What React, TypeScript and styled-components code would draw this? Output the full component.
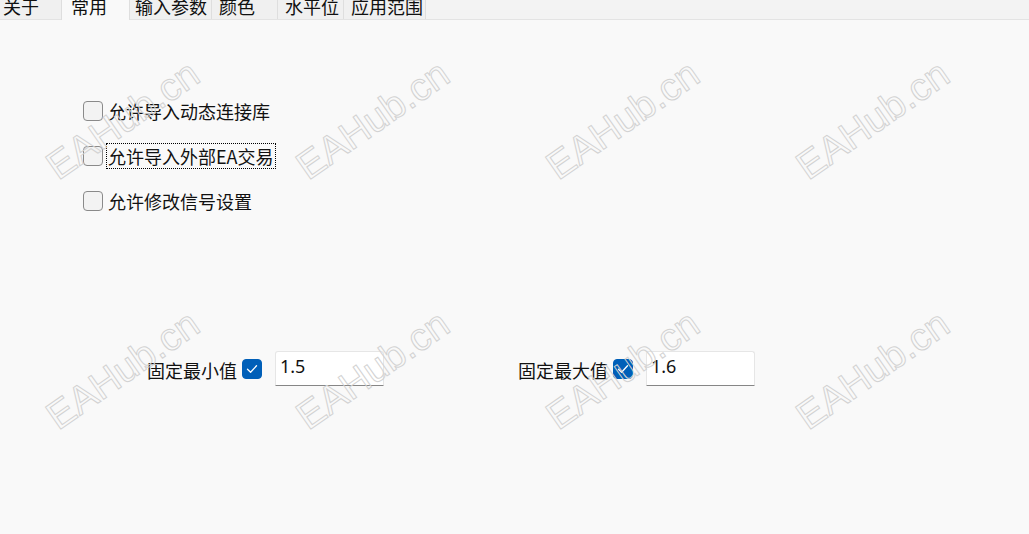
import React from 'react';
import styled, { createGlobalStyle } from 'styled-components';

const GlobalStyle = createGlobalStyle`
  html, body {
    margin: 0;
    padding: 0;
    background: #f9f9f9;
  }
  body {
    font-family: 'Noto Sans CJK SC', 'Noto Sans', sans-serif;
    color: #1a1a1a;
    overflow: hidden;
  }
`;

interface TabInfo {
  title: string;
  width: number;
  pad: number;
}

const tabs: TabInfo[] = [
  { title: '关于', width: 62, pad: 3 },
  { title: '常用', width: 69, pad: 9 },
  { title: '输入参数', width: 82, pad: 5 },
  { title: '颜色', width: 66, pad: 7 },
  { title: '水平位', width: 66, pad: 7 },
  { title: '应用范围', width: 82, pad: 7 },
];

const options = ['允许导入动态连接库', '允许导入外部EA交易', '允许修改信号设置'];

const CheckIcon = () => (
  <svg width="12" height="10" viewBox="0 0 12 10" fill="none">
    <path d="M1.5 5.2 L4.6 8.2 L10.5 1.8" stroke="#fff" strokeWidth="1.3" strokeLinecap="round" strokeLinejoin="round" />
  </svg>
);

export default function App() {
  return (
    <>
      <GlobalStyle />
      <Page>
        <TabBar>
          {tabs.map((t, i) => (
            <Tab key={t.title} $width={t.width} $pad={t.pad} $active={i === 1}>
              {t.title}
            </Tab>
          ))}
        </TabBar>

        <OptionList>
          {options.map((o, i) => (
            <OptionRow key={o}>
              <Box $checked={false} />
              <OptionLabel $focused={i === 1}>{o}</OptionLabel>
            </OptionRow>
          ))}
        </OptionList>

        <FieldRow>
          <Field>
            <FieldLabel>固定最小值</FieldLabel>
            <Box $checked>
              <CheckIcon />
            </Box>
            <ValueInput defaultValue="1.5" />
          </Field>
          <Field>
            <FieldLabel>固定最大值</FieldLabel>
            <Box $checked>
              <CheckIcon />
            </Box>
            <ValueInput defaultValue="1.6" />
          </Field>
        </FieldRow>

        <Watermarks>
          {Array.from({ length: 8 }).map((_, i) => (
            <MarkCell key={i}>
              <MarkText>EAHub.cn</MarkText>
            </MarkCell>
          ))}
        </Watermarks>
      </Page>
    </>
  );
}

const Page = styled.div`
  position: relative;
  width: 1029px;
  height: 534px;
  overflow: hidden;
  background: #f9f9f9;
`;

const TabBar = styled.div`
  display: flex;
  height: 19px;
  background: #f3f3f3;
  border-bottom: 1px solid #e3e3e3;
`;

const Tab = styled.div<{ $width: number; $pad: number; $active: boolean }>`
  box-sizing: border-box;
  width: ${(p) => p.$width}px;
  height: ${(p) => (p.$active ? 20 : 19)}px;
  padding-left: ${(p) => p.$pad}px;
  font-size: 18px;
  line-height: 12px;
  white-space: nowrap;
  color: #111;
  background: ${(p) => (p.$active ? '#f9f9f9' : '#f0f0f0')};
  border-right: 1px solid #dedede;
  border-left: ${(p) => (p.$active ? '1px solid #dedede' : 'none')};
  margin-left: ${(p) => (p.$active ? '-1px' : '0')};
  z-index: ${(p) => (p.$active ? 1 : 0)};
`;

const OptionList = styled.div`
  display: flex;
  flex-direction: column;
  gap: 19px;
  margin-top: 78px;
  padding-left: 83px;
`;

const OptionRow = styled.div`
  display: flex;
  align-items: center;
  gap: 4px;
  height: 26px;
`;

const Box = styled.div<{ $checked: boolean }>`
  box-sizing: border-box;
  width: 20px;
  height: 20px;
  flex: none;
  border-radius: 4px;
  display: flex;
  align-items: center;
  justify-content: center;
  background: ${(p) => (p.$checked ? '#005fb8' : '#f3f3f3')};
  border: 1px solid ${(p) => (p.$checked ? '#005fb8' : '#8a8a8a')};
`;

const OptionLabel = styled.span<{ $focused: boolean }>`
  font-size: 18px;
  line-height: 24px;
  padding: 0 1px;
  white-space: nowrap;
  color: #111;
  outline: ${(p) => (p.$focused ? '1px dotted #000' : 'none')};
`;

const FieldRow = styled.div`
  display: flex;
  gap: 134px;
  margin-top: 137px;
  padding-left: 147px;
`;

const Field = styled.div`
  display: flex;
  align-items: center;
`;

const FieldLabel = styled.span`
  font-size: 18px;
  line-height: 24px;
  width: 90px;
  margin-right: 5px;
  margin-top: 3px;
  white-space: nowrap;
  color: #111;
`;

const ValueInput = styled.input`
  box-sizing: border-box;
  width: 109px;
  height: 35px;
  margin-left: 13px;
  padding: 0 4px 5px;
  font-family: 'Noto Sans', 'Noto Sans CJK SC', sans-serif;
  font-size: 18px;
  color: #111;
  background: #fff;
  border: 1px solid #e6e6e6;
  border-bottom: 1px solid #868686;
  border-radius: 3px 3px 0 0;
  outline: none;
`;

const Watermarks = styled.div`
  position: absolute;
  top: -5px;
  left: -2px;
  display: grid;
  grid-template-columns: repeat(4, 250px);
  grid-template-rows: repeat(2, 250px);
  pointer-events: none;
`;

const MarkCell = styled.div`
  display: flex;
  align-items: center;
  justify-content: center;
`;

const MarkText = styled.span`
  font-family: 'Liberation Sans', Arial, sans-serif;
  font-size: 39px;
  white-space: nowrap;
  color: transparent;
  -webkit-text-stroke: 1px #d2d2d2;
  transform: rotate(-35deg);
`;
